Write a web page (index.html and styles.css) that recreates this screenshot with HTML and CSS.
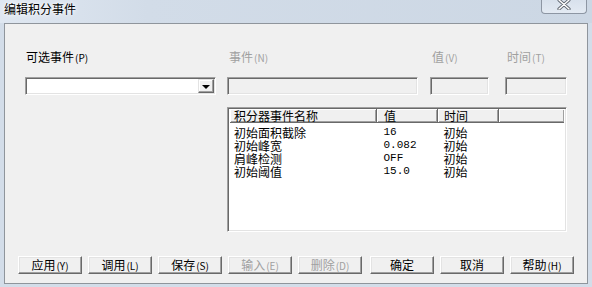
FILE: index.html
```html
<!DOCTYPE html>
<html lang="zh-CN">
<head>
  <meta charset="UTF-8">
  <title>编辑积分事件</title>
  <link rel="stylesheet" href="styles.css">
</head>
<body>
  <div class="window">
    <div class="titlebar">
      <span class="title">编辑积分事件</span>
      <span class="close">
        <svg width="14" height="10" viewBox="0 0 14 10">
          <path d="M2 0 L12 9 M12 0 L2 9" stroke="#5f6670" stroke-width="3.2" stroke-linecap="round"/>
          <path d="M2 0 L12 9 M12 0 L2 9" stroke="#ffffff" stroke-width="1.4" stroke-linecap="round"/>
        </svg>
      </span>
    </div>
    <div class="client">
      <div class="fields">
        <div class="field f-pick">
          <div class="label">可选事件<span class="key">(P)</span></div>
          <div class="combo"><span class="drop"><i></i></span></div>
        </div>
        <div class="field f-event">
          <div class="label off">事件<span class="key">(N)</span></div>
          <div class="edit"></div>
        </div>
        <div class="field f-value">
          <div class="label off">值<span class="key">(V)</span></div>
          <div class="edit"></div>
        </div>
        <div class="field f-time">
          <div class="label off">时间<span class="key">(T)</span></div>
          <div class="edit"></div>
        </div>
      </div>

      <div class="list">
        <table id="eventTable">
          <thead>
            <tr>
              <th class="c-name">积分器事件名称</th>
              <th class="c-val">值</th>
              <th class="c-time">时间</th>
              <th class="c-rest"></th>
            </tr>
          </thead>
          <tbody></tbody>
        </table>
      </div>

      <div class="buttons">
        <button>应用<span class="key">(Y)</span></button>
        <button>调用<span class="key">(L)</span></button>
        <button>保存<span class="key">(S)</span></button>
        <button class="off">输入<span class="key">(E)</span></button>
        <button class="off">删除<span class="key">(D)</span></button>
        <button class="sep">确定</button>
        <button>取消</button>
        <button>帮助<span class="key">(H)</span></button>
      </div>
    </div>
  </div>
  <script>
    const events = [
      { name: "初始面积截除", value: "16", time: "初始" },
      { name: "初始峰宽", value: "0.082", time: "初始" },
      { name: "肩峰检测", value: "OFF", time: "初始" },
      { name: "初始阈值", value: "15.0", time: "初始" }
    ];

    function loadEvents() {
      const tbody = document.getElementById('eventTable').getElementsByTagName('tbody')[0];
      tbody.innerHTML = '';
      events.forEach((e, i) => {
        const row = document.createElement('tr');
        if (i === 0) row.className = 'first';
        row.innerHTML = `
          <td class="c-name">${e.name}</td>
          <td class="c-val num">${e.value}</td>
          <td class="c-time">${e.time}</td>
          <td class="c-rest"></td>
        `;
        tbody.appendChild(row);
      });
    }

    loadEvents();
  </script>
</body>
</html>
```

FILE: styles.css
```css
body {
  margin: 0;
  font-family: "Noto Sans CJK SC", "Liberation Sans", sans-serif;
  font-size: 12px;
  color: #000;
  background-color: #d3dde9;
}
.window {
  width: 592px;
  height: 287px;
  background: #d3dde9;
  overflow: hidden;
}
.titlebar {
  height: 23px;
  display: flex;
  justify-content: space-between;
  align-items: flex-start;
  background: linear-gradient(90deg, #dfe7f1 0%, #d2dce8 25%, #ccd7e4 100%);
}
.title {
  margin: 2px 0 0 4px;
  line-height: 14px;
  font-size: 12px;
  text-shadow: 0 0 6px #ffffff, 0 0 3px #ffffff;
}
.close {
  width: 44px;
  height: 13px;
  margin-right: 5px;
  border: 1px solid #8d96a3;
  border-top: none;
  border-radius: 0 0 4px 4px;
  background: linear-gradient(#d8e1ec, #e3eaf3);
  display: flex;
  justify-content: center;
  align-items: flex-start;
}
.client {
  height: 261px;
  margin: 0 4px;
  border: 1px solid #8f959c;
  background: #f0f0f0;
  padding: 27px 0 0 13px;
  box-sizing: border-box;
}
.fields {
  display: flex;
  padding-left: 7px;
}
.label {
  height: 12px;
  line-height: 12px;
  padding-left: 1px;
  margin-bottom: 14px;
  white-space: nowrap;
}
.label.off {
  color: #a0a0a0;
  padding-left: 2px;
}
.key {
  font-size: 10px;
  margin-left: 1px;
}
.f-pick { width: 191px; }
.f-event { width: 191px; margin-left: 11px; }
.f-value { width: 59px; margin-left: 12px; }
.f-time { width: 62px; margin-left: 16px; }

.edit, .combo {
  height: 18px;
  box-sizing: border-box;
  border: 1px solid;
  border-color: #a0a0a0 #ffffff #ffffff #a0a0a0;
  box-shadow: inset 1px 1px #696969, inset -1px -1px #e3e3e3;
  background: #f0f0f0;
}
.combo {
  background: #fff;
  display: flex;
  justify-content: flex-end;
  padding: 1px;
}
.drop {
  width: 16px;
  height: 14px;
  box-sizing: border-box;
  border: 1px solid;
  border-color: #e3e3e3 #696969 #696969 #e3e3e3;
  box-shadow: inset -1px -1px #a0a0a0, inset 1px 1px #ffffff;
  background: #f0f0f0;
  display: flex;
  justify-content: center;
  align-items: center;
}
.drop i {
  width: 0;
  height: 0;
  border-left: 4px solid transparent;
  border-right: 4px solid transparent;
  border-top: 4px solid #000;
  margin-top: 1px;
}

.list {
  margin: 12px 0 0 209px;
  width: 340px;
  height: 125px;
  box-sizing: border-box;
  border: 1px solid;
  border-color: #a0a0a0 #ffffff #ffffff #a0a0a0;
  box-shadow: inset 1px 1px #696969, inset -1px -1px #e3e3e3;
  background: #fff;
  padding: 1px 2px 0 2px;
}
table {
  width: 100%;
  border-collapse: collapse;
  table-layout: fixed;
}
th, td {
  padding: 0;
  text-align: left;
  font-weight: normal;
  white-space: nowrap;
}
th {
  height: 13px;
  line-height: 13px;
  background: #f0f0f0;
  border-right: 1px solid #696969;
  border-bottom: 1px solid #696969;
  box-shadow: inset 1px 1px #ffffff, inset -1px -1px #a0a0a0;
}
th.c-rest {
  border-right: none;
}
td {
  height: 13px;
  line-height: 13px;
}
tr.first td {
  padding-top: 3px;
}
.c-name { width: 142px; padding-left: 4px; }
.c-val { width: 53px; padding-left: 7px; }
.c-time { width: 54px; padding-left: 6px; }
.num {
  font-family: "Liberation Mono", monospace;
  font-size: 11px;
}

.buttons {
  display: flex;
  gap: 6px;
  margin-top: 24px;
}
button {
  width: 64px;
  height: 18px;
  padding: 0;
  box-sizing: border-box;
  font-family: inherit;
  font-size: 12px;
  line-height: 14px;
  color: #000;
  background: #f0f0f0;
  border: 1px solid;
  border-color: #ffffff #696969 #696969 #ffffff;
  box-shadow: inset -1px -1px #a0a0a0, inset 1px 1px #e3e3e3;
}
button.sep {
  margin-left: 2px;
}
button.off {
  color: #a0a0a0;
}
```
